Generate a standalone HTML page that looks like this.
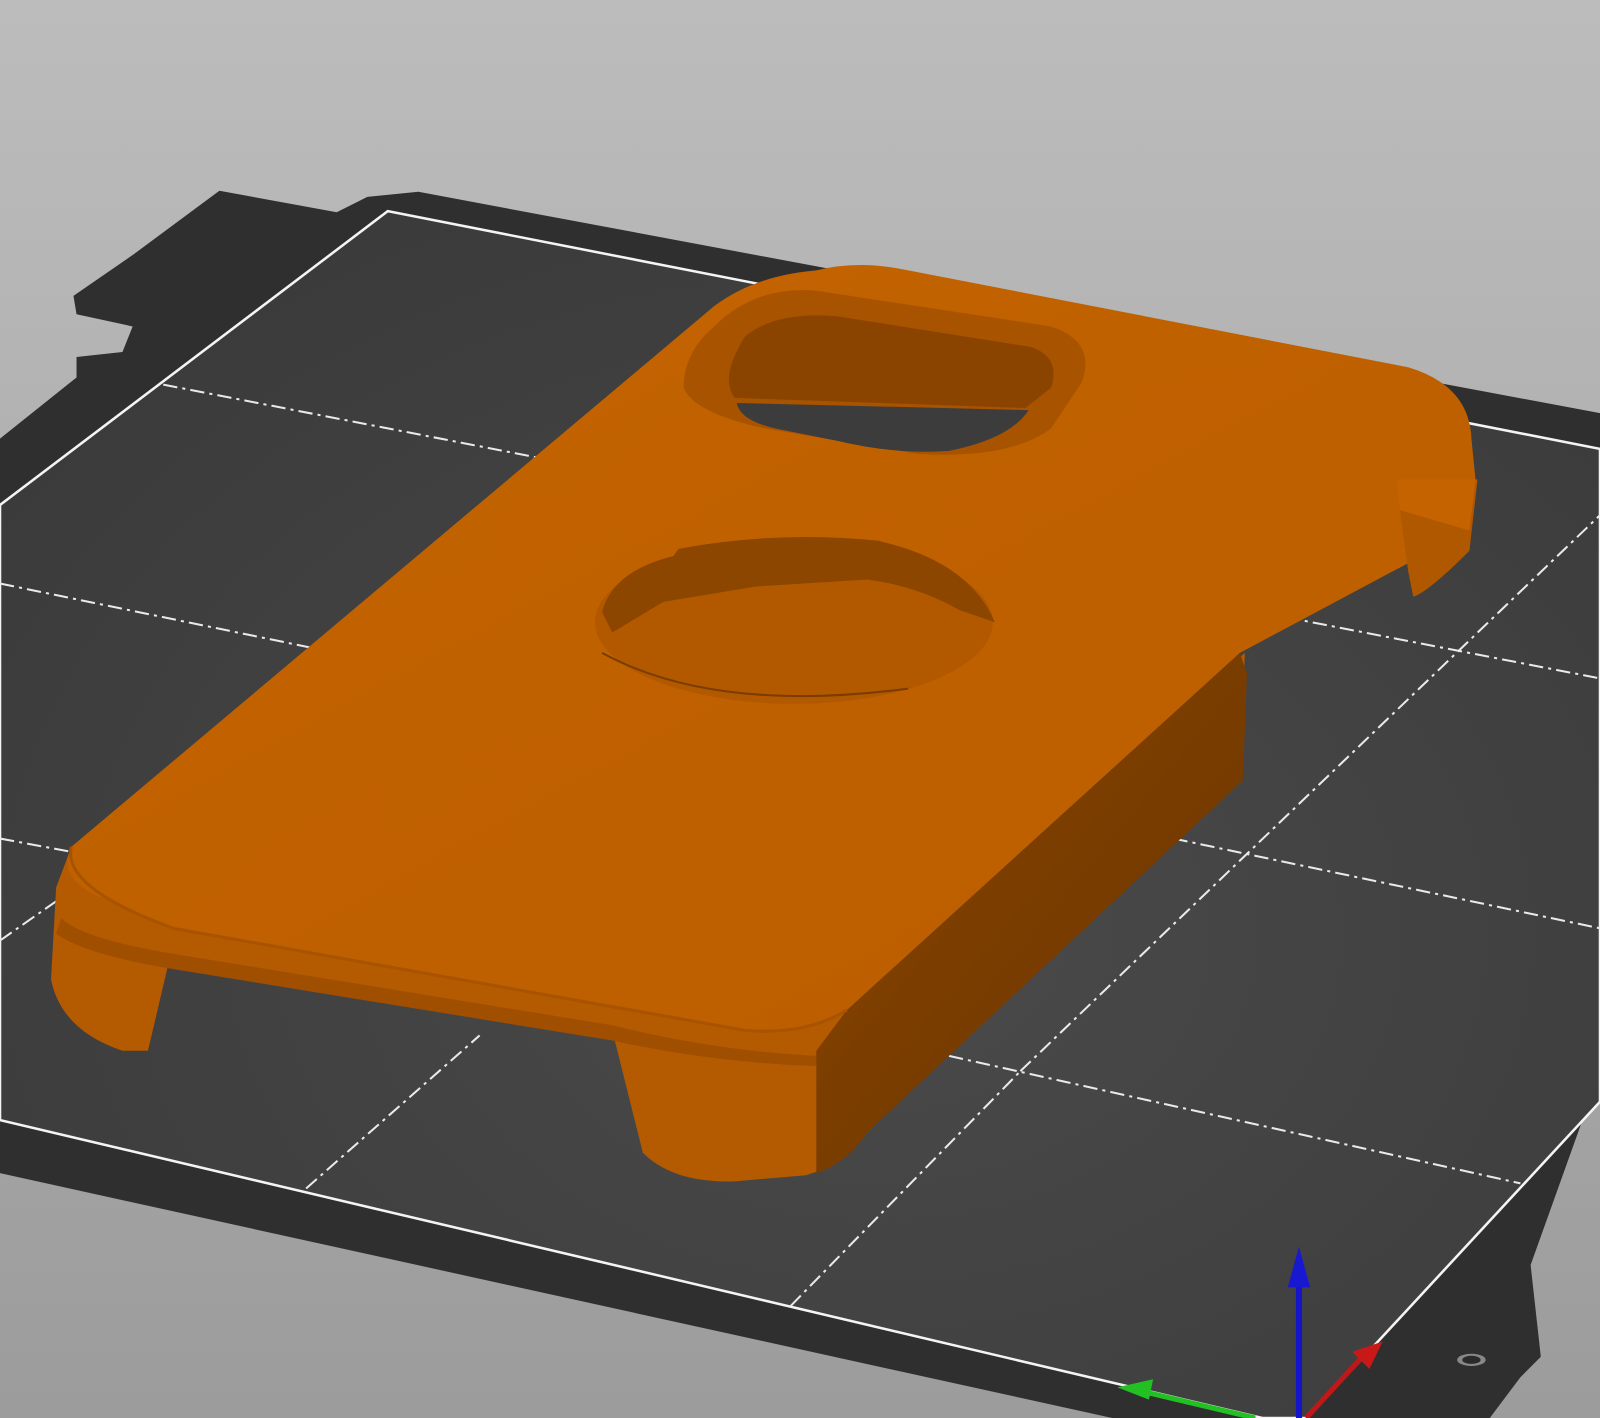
<!DOCTYPE html>
<html><head><meta charset="utf-8"><style>
html,body{margin:0;padding:0;width:1600px;height:1418px;overflow:hidden;background:#aaa}
svg{display:block}
</style></head><body>
<svg width="1600" height="1418" viewBox="0 0 1568 1390" preserveAspectRatio="none" xmlns="http://www.w3.org/2000/svg">
<defs>
<linearGradient id="bg" x1="0" y1="0" x2="0" y2="1">
<stop offset="0" stop-color="#bcbcbc"/><stop offset="1" stop-color="#9c9c9c"/></linearGradient>
<radialGradient id="bed" cx="0.55" cy="0.6" r="0.7">
<stop offset="0" stop-color="#4a4a4a"/><stop offset="1" stop-color="#3a3a3a"/></radialGradient>
<linearGradient id="side" x1="0" y1="0" x2="1" y2="1">
<stop offset="0" stop-color="#8a4600"/><stop offset="1" stop-color="#6a3400"/></linearGradient>
<linearGradient id="top" x1="0" y1="0" x2="1" y2="1">
<stop offset="0" stop-color="#c46300"/><stop offset="1" stop-color="#bb5e00"/></linearGradient>
</defs>
<rect width="1568" height="1390" fill="url(#bg)"/>
<!-- outer bed frame -->
<polygon fill="#2f2f2f" points="215,187 330,208 360,193 410,188 1568,405 1568,1050 1500,1240 1510,1330 1490,1350 1460,1390 1090,1390 0,1150 0,430 75,370 75,350 120,345 130,320 75,308 72,290 130,250"/>
<!-- inner plate -->
<polygon fill="url(#bed)" stroke="#f4f4f4" stroke-width="2.5" points="380,207 1568,440 1568,1080 1281,1390 1237,1390 0,1098 0,495"/>
<!-- grid lines -->
<g stroke="#eaeaea" stroke-width="2" stroke-dasharray="14,5,3,5" fill="none">
<line x1="160" y1="377" x2="560" y2="455"/>
<line x1="0" y1="572" x2="320" y2="638"/>
<line x1="0" y1="822" x2="70" y2="835"/>
<line x1="1260" y1="605" x2="1568" y2="665"/>
<line x1="1150" y1="822" x2="1568" y2="910"/>
<line x1="930" y1="1035" x2="1490" y2="1160"/>
<line x1="0" y1="922" x2="60" y2="880"/>
<line x1="300" y1="1165" x2="470" y2="1015"/>
<line x1="775" y1="1280" x2="1000" y2="1050"/>
<line x1="1000" y1="1050" x2="1568" y2="505"/>
</g>
<!-- axes -->
<line x1="1273" y1="1390" x2="1273" y2="1255" stroke="#1414c8" stroke-width="6"/>
<polygon points="1273,1222 1262,1262 1284,1262" fill="#1818d0"/>
<line x1="1230" y1="1390" x2="1120" y2="1364" stroke="#22c022" stroke-width="5"/>
<polygon points="1095,1360 1130,1352 1126,1372" fill="#22c022"/>
<line x1="1280" y1="1390" x2="1335" y2="1330" stroke="#c01818" stroke-width="5"/>
<polygon points="1355,1315 1325,1325 1342,1342" fill="#c81818"/>
<ellipse cx="1442" cy="1333" rx="14" ry="6" fill="#888"/>
<ellipse cx="1442" cy="1333" rx="9" ry="4" fill="#2a2a2a"/>
<!-- case front lip -->
<path fill="#b45a00" d="M70,830 L55,870 L50,960 Q60,1010 120,1030 L145,1030 L165,945 L600,1010 L630,1130 Q660,1160 720,1158 L790,1152 Q830,1140 850,1110 L1215,760 L1220,640 L830,990 Q790,1015 730,1010 L170,910 L100,880 Z"/>
<path fill="#a04f00" d="M60,900 Q80,920 170,935 L600,1005 Q700,1030 800,1035 L800,1045 Q700,1042 600,1020 L170,950 Q80,935 55,915 Z"/>
<path fill="url(#side)" d="M1215,640 L1222,660 L1218,765 L850,1110 Q830,1140 800,1150 L800,1030 Q815,1010 830,990 Z"/>
<!-- top face -->
<path fill="url(#top)" d="M800,265 Q840,255 885,264 L1380,360 Q1440,378 1442,430 L1446,470 L1440,520 L1215,640 L830,990 Q790,1015 730,1010 L170,910 L100,880 Q55,862 70,830 L700,300 Q740,270 800,265 Z"/>
<path fill="none" stroke="#a85300" stroke-width="3" d="M70,830 Q60,870 170,910 L730,1010 Q790,1015 830,990"/>
<!-- right clip -->
<path fill="#b05800" d="M1368,470 L1380,560 L1385,585 Q1400,580 1440,540 L1448,470 Z"/>
<path fill="#c46300" d="M1368,470 L1372,500 L1440,520 L1446,470 Z"/>
<!-- camera cutout -->
<path fill="#a85300" d="M700,320 Q740,280 800,285 L1030,320 Q1075,335 1060,375 L1030,420 Q990,450 900,445 L750,420 Q680,405 670,380 Q670,345 700,320 Z"/>
<path fill="#8a4400" d="M730,330 Q760,305 820,310 L1010,340 Q1040,350 1030,380 L1005,400 L720,390 Q705,370 730,330 Z"/>
<path fill="#3c3c3c" d="M722,395 L1008,402 Q990,430 930,442 Q880,446 820,432 L760,420 Q725,412 722,395 Z"/>
<!-- circular recess -->
<ellipse cx="778" cy="610" rx="195" ry="80" fill="#b25900"/>
<path fill="#8c4600" d="M590,600 Q600,560 660,545 L665,538 Q760,520 860,530 Q950,550 975,610 L940,598 Q900,575 850,568 L740,575 L650,590 L600,620 Z"/>
<path fill="none" stroke="#7a3c00" stroke-width="2" d="M590,640 Q700,700 890,675"/>
</svg>
</body></html>
